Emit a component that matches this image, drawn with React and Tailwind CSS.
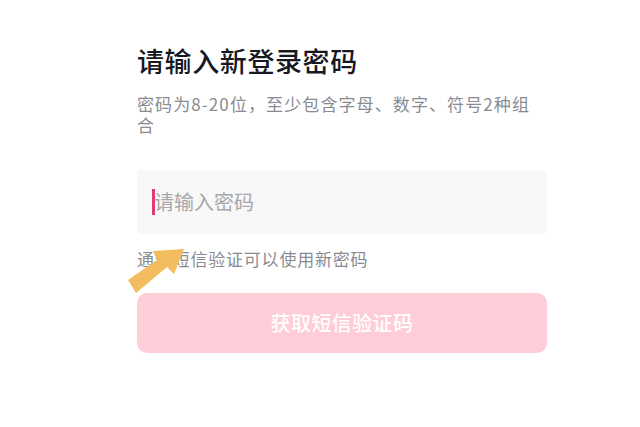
import React from "react";

export default function App() {
  return (
    <div
      className="relative w-[640px] h-[427px] bg-white overflow-hidden"
      style={{ fontFamily: '"Noto Sans CJK SC", "Noto Sans", sans-serif' }}
    >
      <div className="flex flex-col w-[410px] ml-[137px] pt-[41px]">
        <h1 className="text-[27px] leading-[40px] font-medium text-[#161823] tracking-[0.6px]">
          请输入新登录密码
        </h1>
        <p className="mt-[12px] w-[400px] text-[17px] leading-[21px] text-[#8a8b91] tracking-[1.1px]">
          密码为8-20位，至少包含字母、数字、符号2种组合
        </p>
        <div className="mt-[35px] h-[64px] rounded-[4px] bg-[#f8f8f8] flex items-center pl-[15px]">
          <div className="w-[3px] h-[26px] bg-[#e33b6e]" />
          <span className="text-[20px] text-[#a6a7ac] -ml-[1px]">请输入密码</span>
        </div>
        <p className="mt-[13px] text-[17px] leading-[24px] text-[#8a8b91] tracking-[0.8px]">
          通过短信验证可以使用新密码
        </p>
        <button className="mt-[22px] h-[60px] rounded-[10px] bg-[#fecdd8] text-white text-[20px] font-medium tracking-[0.4px]">
          获取短信验证码
        </button>
      </div>
      <svg
        className="absolute left-0 top-0"
        width="640"
        height="427"
        viewBox="0 0 640 427"
      >
        <polygon
          points="128,280 157,260 153,251 184,249 174,274 167,267 136,293"
          fill="#f3bd5f"
        />
      </svg>
    </div>
  );
}
